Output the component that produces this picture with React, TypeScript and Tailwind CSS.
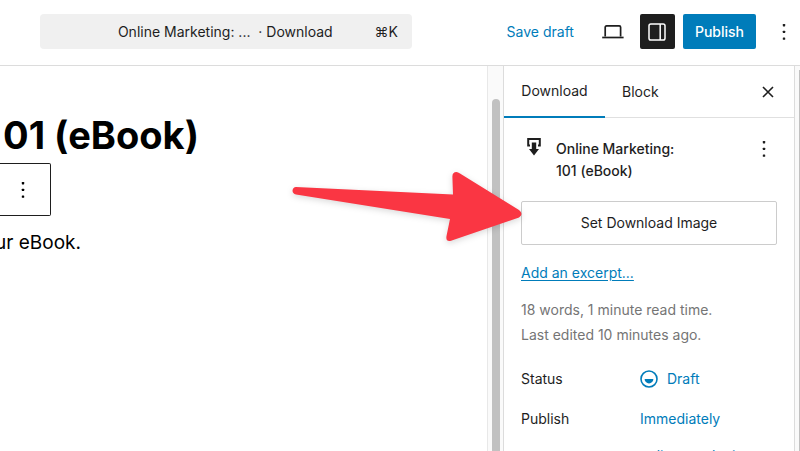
import React from "react";

function Dots({ className = "" }: { className?: string }) {
  return (
    <svg viewBox="0 0 4 18" className={`h-[18px] w-1 fill-current ${className}`} aria-hidden="true">
      <rect x="0.8" y="1" width="2.4" height="2.4" rx="0.6" />
      <rect x="0.8" y="7.7" width="2.4" height="2.4" rx="0.6" />
      <rect x="0.8" y="14.4" width="2.4" height="2.4" rx="0.6" />
    </svg>
  );
}

function Header() {
  return (
    <header className="flex shrink-0 items-center border-b border-[#dcdcdc] bg-white pb-4 pl-10 pr-[14px] pt-[14px]">
      <button className="flex h-[35px] max-w-[372px] flex-1 items-center rounded bg-[#f0f0f0] pr-[14px]">
        <span className="flex-1 whitespace-pre pl-9 text-center">
          Online Marketing: ...{"  "}· Download
        </span>
        <span>⌘K</span>
      </button>
      <div className="ml-auto flex items-center">
        <button className="mr-7 text-[#007cba]">Save draft</button>
        <button aria-label="Preview" className="mr-4">
          <svg viewBox="0 0 22 16" className="h-4 w-[22px]" fill="none" stroke="currentColor" strokeWidth="1.7">
            <path d="M3.2 12.6V3.3Q3.2 1.9 4.6 1.9H17.2Q18.6 1.9 18.6 3.3V12.6" />
            <path d="M0.2 13.5H21.6" />
          </svg>
        </button>
        <button aria-label="Settings" className="mr-2 flex size-[35px] items-center justify-center rounded-xs bg-[#1e1e1e] text-white">
          <svg viewBox="0 0 18 18" className="size-[18px]" fill="none" stroke="currentColor" strokeWidth="1.5">
            <rect x="1" y="0.9" width="16" height="16.2" rx="1.8" />
            <path d="M12.2 1V17" />
          </svg>
        </button>
        <button className="h-[35px] rounded-xs bg-[#007cba] px-3 font-medium text-white">Publish</button>
        <button aria-label="Options" className="ml-[26px]">
          <Dots />
        </button>
      </div>
    </header>
  );
}

function Canvas() {
  return (
    <main className="min-w-0 flex-1 overflow-hidden text-black">
      <div className="flex w-[199px] justify-end pt-[46px]">
        <h1 className="whitespace-nowrap text-[38px] font-bold leading-[46px]">01 (eBook)</h1>
      </div>
      <div className="mt-[5px] flex h-[53px] w-[51px] items-center justify-end rounded-r-xs border border-l-0 border-[#1e1e1e] pr-[25px]">
        <button aria-label="Block options">
          <Dots />
        </button>
      </div>
      <div className="flex w-[81px] justify-end pt-[13px]">
        <p className="whitespace-nowrap text-[19px] leading-7">ur eBook.</p>
      </div>
    </main>
  );
}

function Sidebar() {
  return (
    <aside className="w-[292px] shrink-0 border-x border-[#dcdcdc] bg-white">
      <div className="flex h-[52px] border-b border-[#e0e0e0]">
        <button className="-mb-px w-[101px] border-b-2 border-[#007cba]">Download</button>
        <button className="px-[17px]">Block</button>
        <button aria-label="Close" className="ml-auto mr-5">
          <svg viewBox="0 0 12 12" className="size-3" fill="none" stroke="currentColor" strokeWidth="1.6">
            <path d="M1 1L11 11M11 1L1 11" />
          </svg>
        </button>
      </div>
      <div className="px-[17px] pt-5">
        <div className="flex items-start">
          <svg viewBox="0 0 14 18" className="ml-[6px] mr-[15px] h-[18px] w-[14px]" aria-hidden="true">
            <path d="M3 7.6H1.2V1H12.8V7.6H11" fill="none" stroke="currentColor" strokeWidth="2" />
            <path d="M4.8 4.6H9.2V11H12L7 17.4L2 11H4.8Z" fill="currentColor" />
          </svg>
          <h2 className="w-[140px] font-medium leading-[22px]">Online Marketing: 101 (eBook)</h2>
          <button aria-label="Actions" className="ml-auto mr-[11px] mt-[2px]">
            <Dots />
          </button>
        </div>
        <button className="mt-[19px] h-11 w-full rounded-xs border border-[#ccc]">Set Download Image</button>
        <a href="#excerpt" className="mt-4 block leading-6 text-[#007cba] underline underline-offset-2">
          Add an excerpt...
        </a>
        <p className="mt-3 leading-[25px] text-[#757575]">
          18 words, 1 minute read time.
          <br />
          Last edited 10 minutes ago.
        </p>
        <dl className="mt-3 grid grid-cols-[119px_1fr] items-center leading-10">
          <dt>Status</dt>
          <dd>
            <button className="flex items-center text-[#007cba]">
              <svg viewBox="0 0 18 18" className="mr-[9px] size-[18px]" aria-hidden="true">
                <circle cx="9" cy="9" r="8" fill="none" stroke="currentColor" strokeWidth="1.6" />
                <path d="M4.6 9H13.4A4.4 4.4 0 0 1 4.6 9Z" fill="currentColor" />
              </svg>
              Draft
            </button>
          </dd>
          <dt>Publish</dt>
          <dd>
            <button className="text-[#007cba]">Immediately</button>
          </dd>
          <dt>Link</dt>
          <dd className="py-[7px] leading-5">
            <button className="text-left text-[#007cba]">online-marketing-101-ebook</button>
          </dd>
        </dl>
      </div>
    </aside>
  );
}

export default function App() {
  return (
    <div className="relative flex h-screen flex-col overflow-hidden bg-white font-['Inter','Liberation_Sans',sans-serif] text-sm text-[#1e1e1e]">
      <Header />
      <div className="flex min-h-0 flex-1">
        <Canvas />
        <div className="flex w-4 shrink-0 justify-center border-l border-[#e8e8e8] bg-[#fafafa] pt-[33px]">
          <div className="w-2 rounded-t-full bg-[#c1c1c1]" />
        </div>
        <Sidebar />
        <div className="flex w-[5px] shrink-0 justify-end bg-[#fafafa] pt-1">
          <div className="w-px bg-[#c1c1c1]" />
        </div>
      </div>
      <svg
        viewBox="0 0 240 80"
        className="pointer-events-none absolute left-[287px] top-[167px] h-20 w-60 drop-shadow-[0_2px_3px_rgba(0,0,0,0.15)]"
        aria-hidden="true"
      >
        <path
          d="M9 20L166 27.5L165.4 10Q165.2 5 169.5 5Q171 5.2 173 6.4L232 43Q237 47 232 50.5L164 73.8Q158.5 75 159.5 69L163 52L9 27.5Q5.5 26.5 5.5 23.5Q6 20 9 20Z"
          fill="#fa3643"
        />
      </svg>
    </div>
  );
}
